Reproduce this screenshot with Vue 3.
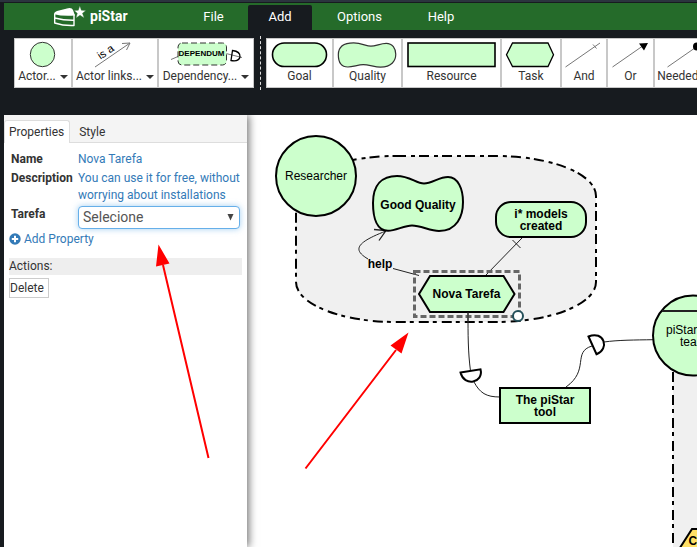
<script setup>
const menus = [
  { label: 'File', cls: 'file' },
  { label: 'Add', cls: 'add', active: true },
  { label: 'Options', cls: 'options' },
  { label: 'Help', cls: 'help' },
]
const quality =
  'M373 203C373 185 382 176 397 176C410 176 416 183.5 424 183.5C432 183.5 439 177 448 177C458 177 463 189 463 202C463 216 457 231 439 231C430 231 421 225.5 412 225.5C404 225.5 396 230.7 388 230.7C377 230.7 373 218 373 203Z'
</script>

<template>
  <div class="app">
    <header class="menubar">
      <div class="brand">
        <svg width="34" height="24" viewBox="53 5 34 24">
          <path d="M54.700 13.500V23Q64 26 74 25.500V14.500" fill="none" stroke="#fff" stroke-width="1.400" stroke-linejoin="round" />
          <path d="M54 14.200Q54 12 57 11L68 8.200Q72 7.500 73 10L75 15.500Q63 16.500 54 14.200Z" fill="#fff" />
          <path d="M54.700 18Q64 20.500 74 20.300" fill="none" stroke="#fff" stroke-width="1.500" />
          <path d="M79.800 5.800L81.400 10.200L86 10.400L82.500 13.200L84.200 18L80 15.300L76 18L77.300 13.300L74 10.500L78.300 10.200Z" fill="#fff" stroke="#256b2a" stroke-width=".4" />
        </svg>
        <span>piStar</span>
      </div>
      <nav>
        <a v-for="m in menus" :key="m.label" :class="[m.cls, { active: m.active }]">{{ m.label }}</a>
      </nav>
    </header>

    <section class="toolbar">
      <div class="group">
        <button class="tool w-actor">
          <svg width="28" height="26" viewBox="0.500 0.500 28 26"><circle cx="14" cy="13" r="12.200" class="shape thin" /></svg>
          <span>Actor...<i class="caret" /></span>
        </button>
        <button class="tool w-links">
          <svg width="46" height="26" viewBox="1 0 46 26">
            <path d="M4 25L39 1M31 1.500L39 1L35.500 8" class="wire" />
            <text x="15" y="10.500" transform="rotate(-34 15 10.500)" class="isa" text-anchor="middle" dy="3">is a</text>
          </svg>
          <span>Actor links...<i class="caret" /></span>
        </button>
        <button class="tool w-dep">
          <svg width="74" height="26" viewBox="169 41.500 74 26">
            <path d="M171 59L178 56M226 53L242 57" class="wire" />
            <rect x="178" y="42.500" width="48.500" height="22" rx="4" class="shape thin dashed" />
            <text x="201.500" y="55" class="dependum" text-anchor="middle" textLength="46">DEPENDUM</text>
            <path d="M232.500 50L231 60Q238.500 61.500 240 56.500Q240.500 51 232.500 50Z" class="dee" />
          </svg>
          <span>Dependency...<i class="caret" /></span>
        </button>
      </div>
      <div class="divider" />
      <div class="group">
        <button class="tool w-goal">
          <svg width="56" height="26"><rect x="0.500" y="1" width="54" height="23.500" rx="11.700" class="shape" /></svg>
          <span>Goal</span>
        </button>
        <button class="tool w-quality">
          <svg width="60" height="26" viewBox="372.500 174 94 59" preserveAspectRatio="none"><path :d="quality" class="shape scaled" /></svg>
          <span>Quality</span>
        </button>
        <button class="tool w-resource">
          <svg width="90" height="26"><rect x="0" y="1" width="87" height="23.500" class="shape inset" /></svg>
          <span>Resource</span>
        </button>
        <button class="tool w-task">
          <svg width="50" height="26"><path d="M0.500 12.700L6.500 1H42L47.500 12.700L42 24.500H6.500Z" class="shape task" /></svg>
          <span>Task</span>
        </button>
        <button class="tool w-and">
          <svg width="38" height="26"><path d="M0.500 25L35 1M28 2.500L31.500 6.500" class="wire" /></svg>
          <span>And</span>
        </button>
        <button class="tool w-or">
          <svg width="38" height="26"><path d="M0.500 25L30 4.500" class="wire" /><path d="M27 1.500L36 1L32 8.500Z" /></svg>
          <span>Or</span>
        </button>
        <button class="tool w-needed">
          <svg width="38" height="26"><path d="M0.500 25L30 4.500" class="wire" /><circle cx="30" cy="4.500" r="4" /></svg>
          <span>Needed by</span>
        </button>
      </div>
    </section>

    <main class="workspace">
      <aside class="panel">
        <div class="tabs">
          <span class="tab current">Properties</span>
          <span class="tab">Style</span>
        </div>
        <dl class="props">
          <dt>Name</dt>
          <dd>Nova Tarefa</dd>
          <dt>Description</dt>
          <dd>You can use it for free, without worrying about installations</dd>
          <dt>Tarefa</dt>
          <dd>
            <div class="select"><span>Selecione</span><svg width="7" height="8" viewBox="0 0 7 8"><path d="M0.500 0H6.500L3.500 6.500Z" fill="#444" /></svg></div>
          </dd>
        </dl>
        <a class="add-prop">
          <svg width="12" height="12" viewBox="0 0 12 12"><circle cx="6" cy="6" r="5.700" fill="#337ab7" /><path d="M6 2.800V9.200M2.800 6H9.200" stroke="#fff" stroke-width="2" /></svg>
          Add Property
        </a>
        <div class="actions">Actions:</div>
        <button class="delete">Delete</button>
      </aside>

      <svg class="canvas" width="450" height="432" viewBox="247 115 450 432">
        <rect x="296" y="156" width="300" height="166" rx="100" ry="40" class="boundary" />
        <path d="M697 315H673V547H697Z" fill="#f0f0f0" />
        <path d="M673 566V335" class="boundary edge" />

        <path d="M419 275.500L393 268.500M368 259C353 250 355 243 386 231" class="link" />
        <path d="M374 229.500L386 230.500L379 240.500" class="link sharp" />
        <text x="380" y="268" class="b">help</text>
        <path d="M522 238L486 275M512.500 240L520.500 248" class="link" />
        <path d="M468 312C468 335 468 352 470.500 371M474 382C480 393 486 397 500 397" class="link" />
        <path d="M566 387C590 370 572 352 592 346M604 342C618 340 635 340 653 339.700" class="link" />
        <path d="M460.500 372.500L480.500 369.300C484 383 464 387 460.500 372.500Z" class="dep" />
        <path d="M588.500 336.500L596.500 354.200C610 349 604 330 588.500 336.500Z" class="dep" />

        <circle cx="316" cy="176" r="40" class="shape" />
        <text x="316" y="180">Researcher</text>
        <path :d="quality" class="shape" />
        <text x="418" y="209" class="b">Good Quality</text>
        <rect x="496" y="202" width="90" height="35" rx="15" class="shape" />
        <text x="541" y="218" class="b">i* models</text>
        <text x="541" y="230" class="b">created</text>

        <path d="M419 294L430 276H503.500L514.500 294L503.500 312H430Z" class="shape" />
        <text x="466.500" y="298" class="b">Nova Tarefa</text>
        <rect x="414.500" y="271.500" width="105" height="45" class="selection" />
        <path d="M468 312V322" class="link" />
        <circle cx="518" cy="316" r="5" class="handle" />

        <rect x="500" y="388" width="90" height="35" class="shape" />
        <text x="545" y="404" class="b">The piStar</text>
        <text x="545" y="416" class="b">tool</text>

        <circle cx="693" cy="335.500" r="40" class="shape" />
        <path d="M662 311H697" stroke="#222" stroke-width="2" />
        <text x="666" y="334" class="start">piStar</text>
        <text x="680" y="346" class="start">team</text>
        <path d="M676 554L692 529H706V554Z" fill="#ffe066" stroke="#000" stroke-width="2" />
        <text x="688.500" y="545" class="b start">C</text>
      </svg>
    </main>

    <svg class="pointers" width="697" height="547">
      <path d="M208.500 458L163 265M305.500 468.500L396 350" stroke="#f00" stroke-width="2" />
      <path d="M158.500 244.500L169.500 263.500L156 266.500ZM408.500 332.500L401.500 353.500L390.500 345.500Z" fill="#f00" />
    </svg>
  </div>
</template>

<style>
body { margin: 0; overflow: hidden; }
</style>

<style scoped>
.app {
  position: relative;
  box-sizing: border-box;
  width: 697px;
  height: 547px;
  overflow: hidden;
  padding-left: 4px;
  background: #171b1f;
  border-top: 2px solid #2b343e;
  font: 12px/17px Roboto, sans-serif;
  color: #333;
}
.menubar { display: flex; height: 27px; margin-top: 1px; background: #256b2a; color: #fff; }
.brand { display: flex; width: 180px; padding-left: 49px; box-sizing: border-box; gap: 3px; font-size: 14px; font-weight: 700; line-height: 26px; }
.brand svg { margin-top: 2px; flex: none; }
nav { display: flex; flex: 1; font-size: 13px; line-height: 27px; }
nav a { text-align: center; box-sizing: border-box; }
.file { width: 59px; }
.add { width: 64px; margin-left: 5px; }
.options { width: 95px; }
.help { width: 68px; }
nav .active { background: #171b1f; margin-top: 2px; line-height: 23px; border-radius: 2px 2px 0 0; }
.toolbar { display: flex; height: 85px; padding: 8px 0 0 10px; box-sizing: border-box; }
.group { display: flex; flex: none; height: 50px; }
.tool {
  flex: none;
  display: flex;
  flex-direction: column;
  align-items: center;
  box-sizing: border-box;
  height: 50px;
  padding: 3px 0 0;
  border: 1px solid #c8c8c8;
  background: #fff;
  color: #333;
  font: 12px/17px Roboto, sans-serif;
  white-space: nowrap;
}
.tool > svg { flex: none; display: block; overflow: visible; }
.w-actor { width: 58px; }
.w-links { width: 86px; }
.w-dep { width: 96px; }
.w-goal { width: 67px; }
.w-quality { width: 69px; }
.w-resource { width: 99px; }
.w-task { width: 60px; }
.w-and { width: 46px; }
.w-or { width: 47px; }
.w-needed { width: 63px; }
.caret { display: inline-block; margin-left: 4px; vertical-align: 1px; border: 4px solid transparent; border-top-color: #333; border-bottom: 0; }
.divider { flex: none; width: 0; height: 54px; margin: -2px 5px 0 6px; border-left: 1px dashed #ddd; }
.shape { fill: #ccffcc; stroke: #000; stroke-width: 2; }
.tool .shape { stroke-width: 1.6; }
.tool .thin { stroke: #333; stroke-width: 1; }
.dashed { stroke-dasharray: 6 3; }
.tool .scaled { vector-effect: non-scaling-stroke; stroke-width: 1.2; stroke: #333; }
.tool .task { stroke-width: 1.3; }
.tool .inset { transform: translateX(1px); }
.wire { fill: none; stroke: #777; stroke-width: 1; }
.isa { font: 11px "Liberation Sans", sans-serif; }
.dependum { font: bold 8px "Liberation Sans", sans-serif; }
.dee { fill: none; stroke: #000; stroke-width: 1.3; }
.workspace { display: flex; height: 432px; background: #fff; }
.panel { position: relative; flex: none; width: 243px; background: #fff; box-shadow: 2px 0 8px rgba(0, 0, 0, 0.55); clip-path: inset(0 -14px 0 0); }
.tabs { display: flex; height: 28px; padding-top: 5px; box-sizing: border-box; background: #f4f4f4; border-bottom: 1px solid #ddd; }
.tab { padding: 4px 9px 0 8px; height: 18px; line-height: 17px; }
.tabs .current { box-sizing: border-box; height: 23px; margin-bottom: -1px; padding: 3px 5px 0 4px; background: #fff; border: 1px solid #ddd; border-bottom: 0; border-radius: 3px 3px 0 0; }
.current + .tab { padding-left: 9px; }
.props { display: grid; grid-template-columns: 67px 163px; margin: 8px 0 0 7px; row-gap: 2px; line-height: 17px; }
dt { font-weight: 700; }
dd { margin: 0; color: #337ab7; }
.select { display: flex; align-items: center; justify-content: space-between; box-sizing: border-box; width: 162px; height: 23px; padding: 0 5px 0 4px; border: 1px solid #66afe9; border-radius: 4px; box-shadow: 0 0 6px rgba(102, 175, 233, 0.6); color: #555; font-size: 14px; background: #fff; }
.add-prop { display: flex; align-items: center; gap: 3px; margin: 2px 0 0 5px; color: #337ab7; }
.add-prop svg { margin-top: -2px; }
.actions { width: 233px; height: 17px; margin: 10px 0 0 5px; background: #eee; }
.delete { display: block; margin: 3px 0 0 5px; width: 40px; height: 20px; padding: 0; border: 1px solid #ccc; background: #fff; color: #333; font: 12px/17px Roboto, sans-serif; text-align: left; }
.canvas { flex: none; display: block; }
.canvas text { font: 12px "Liberation Sans", sans-serif; fill: #000; text-anchor: middle; }
.canvas .b { font-weight: 700; }
.canvas .start { text-anchor: start; }
.boundary { fill: #f0f0f0; stroke: #000; stroke-width: 2; stroke-dasharray: 10 5 4 4; }
.edge { fill: none; }
.link { fill: none; stroke: #222; stroke-width: 1; }
.sharp { stroke-width: 1.3; }
.dep { fill: #fff; stroke: #000; stroke-width: 2; }
.selection { fill: none; stroke: #666; stroke-width: 3; stroke-dasharray: 6 3; }
.handle { fill: #fff; stroke: #24505a; stroke-width: 2; }
.pointers { position: absolute; left: 0; top: -2px; pointer-events: none; }
</style>
